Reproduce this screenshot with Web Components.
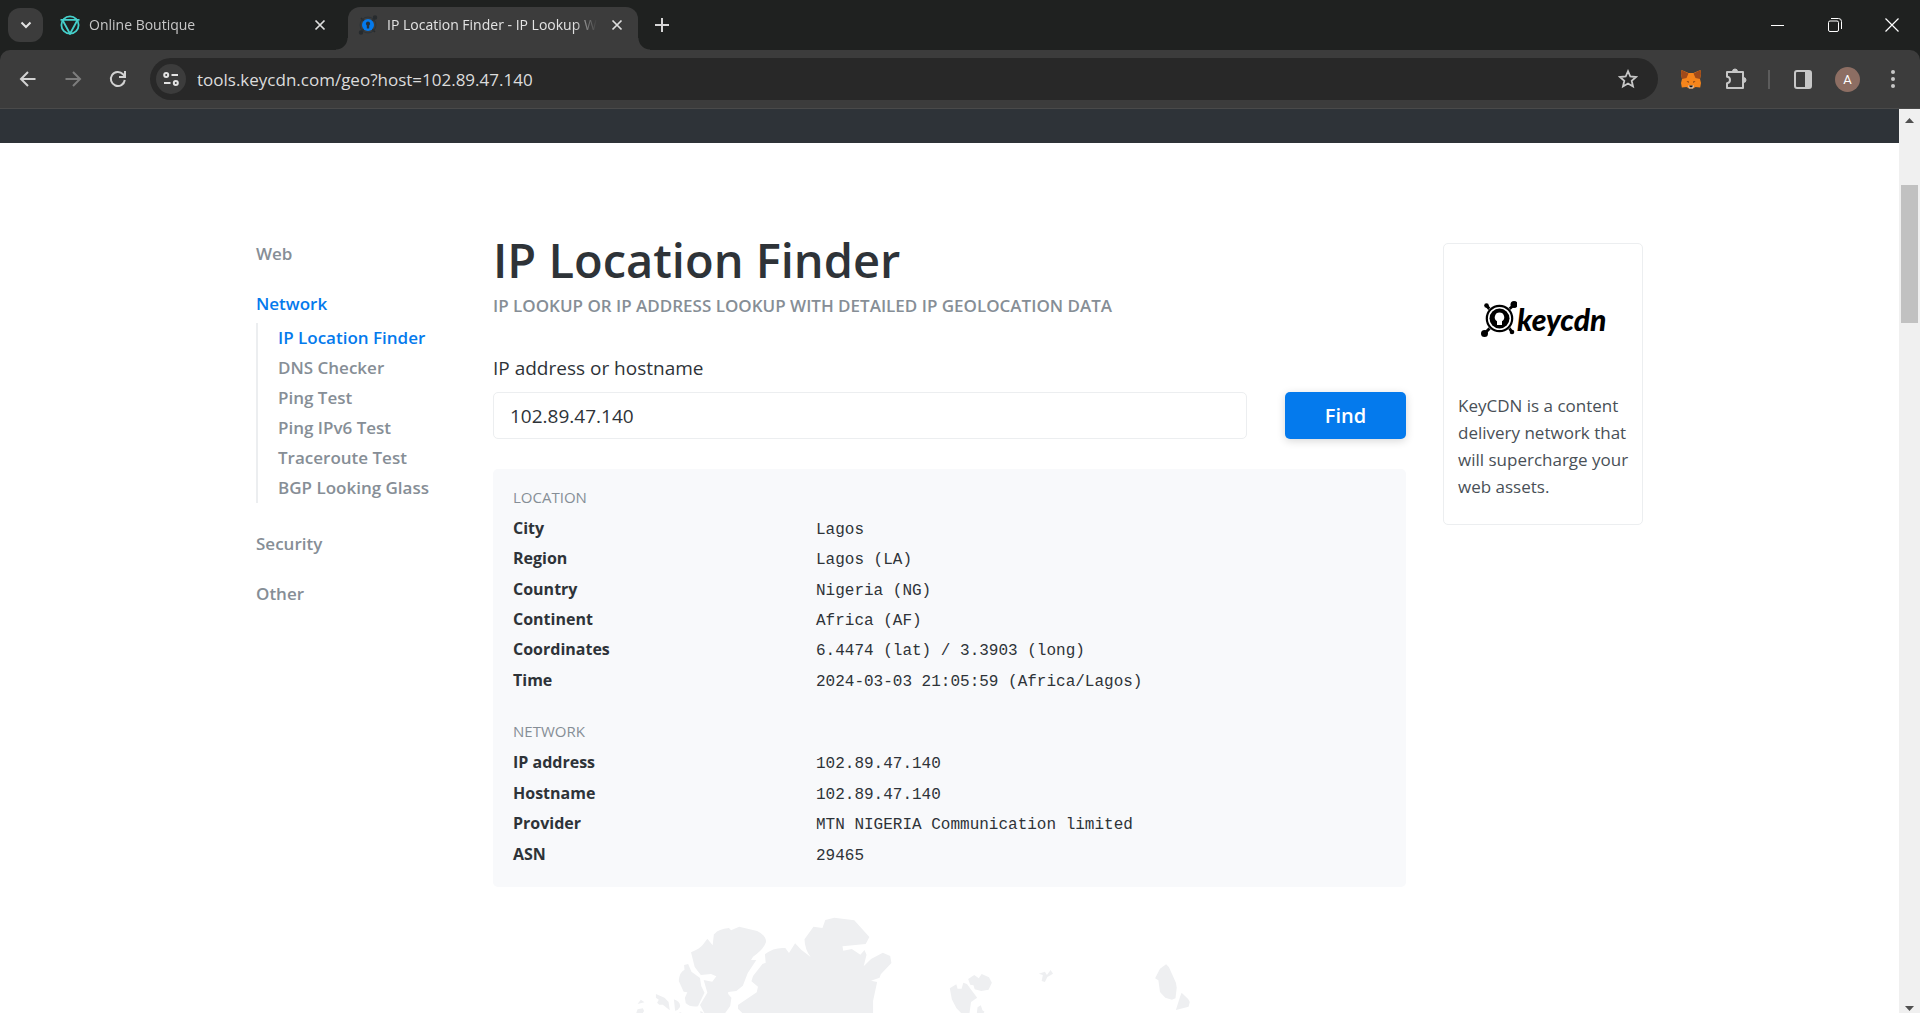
<!DOCTYPE html>
<html lang="en">
<head>
<meta charset="utf-8">
<title>IP Location Finder</title>
<style>
html,body{margin:0;height:100%}
body{font-family:"Open Sans","Noto Sans",sans-serif;color:#2e3338;background:#fff;overflow:hidden}
</style>
</head>
<body>
<app-window></app-window>
<script>
function define(name, html){
  const t=document.createElement('template');
  t.innerHTML=html;
  customElements.define(name, class extends HTMLElement{
    constructor(){super();this.attachShadow({mode:'open'}).appendChild(t.content.cloneNode(true));}
  });
}

define('icon-button', `
<style>
:host{display:flex;flex:none;width:45px;height:36px}
button{all:unset;box-sizing:border-box;flex:1;display:flex;align-items:center;justify-content:center;cursor:pointer}
</style><button type="button"><slot></slot></button>`);

define('browser-tab', `
<style>
:host{display:flex;align-items:center;box-sizing:border-box;height:43px;padding:0 10px 7px;color:#c7c7c7;font-size:14px;position:relative}
:host([active]){background:#3c3c3c;color:#e3e3e3;border-radius:12px 12px 0 0}
:host([active])::before,:host([active])::after{content:"";position:absolute;bottom:0;width:12px;height:12px}
:host([active])::before{left:-12px;background:radial-gradient(circle at 0 0,transparent 11px,#3c3c3c 12px)}
:host([active])::after{right:-12px;background:radial-gradient(circle at 100% 0,transparent 11px,#3c3c3c 12px)}
.title{flex:1;min-width:0;overflow:hidden;white-space:nowrap;margin-left:9px;line-height:20px;-webkit-mask-image:linear-gradient(90deg,#000 calc(100% - 24px),transparent);mask-image:linear-gradient(90deg,#000 calc(100% - 24px),transparent)}
icon-button{width:22px;height:22px;margin-left:9px}
</style>
<slot name="icon"></slot><span class="title"><slot></slot></span>
<icon-button><svg width="12" height="12" viewBox="0 0 12 12" stroke="#dedede" stroke-width="1.7"><path d="M1.5 1.5l9 9M10.5 1.5l-9 9"/></svg></icon-button>`);

define('tab-strip', `
<style>
:host{display:flex;align-items:flex-end;height:50px;background:#1f2120}
.search{all:unset;width:35px;height:34px;margin:0 7px 8px 8px;border-radius:12px;background:#3c3c3c;display:flex;align-items:center;justify-content:center}
.bg{width:291px;margin-right:7px;box-sizing:border-box}
.active{width:290px}
.plus{margin:0 0 7px 1px}
.win{margin-left:auto;display:flex}
.win icon-button{width:57px;height:50px}
</style>
<button class="search" aria-label="Search tabs"><svg width="12" height="8" viewBox="0 0 12 8" fill="none" stroke="#e3e3e3" stroke-width="2"><path d="M1.5 1.5L6 6l4.500-4.500"/></svg></button>
<browser-tab class="bg"><svg slot="icon" width="20" height="20" viewBox="0 0 20 20" fill="none" stroke="#45d0cb" stroke-width="1.800"><circle cx="10" cy="10" r="8.600"/><path d="M.5 4.800h19M2.500 5l7.500 13.800L17.500 5"/></svg>Online Boutique</browser-tab>
<browser-tab class="active" active><svg slot="icon" width="20" height="20" viewBox="0 0 20 20"><g stroke="#272b2e" stroke-width="1.500" fill="#272b2e"><path d="M3 3l14 14M17 3L3 17"/><circle cx="17" cy="2.500" r="1.500"/><circle cx="3" cy="17.500" r="1.500"/></g><circle cx="10" cy="10" r="8" fill="none" stroke="#2c3338"/><circle cx="10" cy="10" r="6" fill="#047aed"/><path d="M10 6.500a2.200 2.200 0 0 1 1.200 4v3H8.800v-3a2.200 2.200 0 0 1 1.200-4z" fill="#26303a"/></svg>IP Location Finder - IP Lookup With Detailed</browser-tab>
<icon-button class="plus"><svg width="14" height="14" viewBox="0 0 14 14" stroke="#d6d6d6" stroke-width="2"><path d="M7 0v14M0 7h14"/></svg></icon-button>
<div class="win">
<icon-button><svg width="14" height="14"><path d="M0 7.500h13" stroke="#fff"/></svg></icon-button>
<icon-button><svg width="14" height="14" viewBox="0 0 14 14" fill="none" stroke="#fff"><rect x=".5" y="3" width="10" height="10.500" rx="1.500"/><path d="M3 .5h7.500a3 3 0 0 1 3 3V11"/></svg></icon-button>
<icon-button><svg width="14" height="14" viewBox="0 0 14 14" stroke="#fff" stroke-width="1.200"><path d="M.5.5l13 13M13.500.5l-13 13"/></svg></icon-button>
</div>`);

define('tool-bar', `
<style>
:host{display:block;background:#1f2120}
.bar{display:flex;align-items:center;box-sizing:border-box;height:59px;padding:0 5px;background:#3c3c3c;border-bottom:1px solid #4a4a4a;border-radius:10px 10px 0 0}
.omni{flex:1;display:flex;align-items:center;height:42px;margin:0 10px 0 10px;border-radius:21px;background:#282828}
.tune{width:30px;height:30px;margin:0 11px 0 6px;border-radius:50%;background:#3c3c3c}
input{flex:1;min-width:0;border:0;outline:0;padding:0;height:30px;font:17px "Open Sans","Noto Sans",sans-serif;color:#dcdcdc;background:none}
.star{width:60px}
.sep{width:2px;height:19px;margin:0 10px;background:#5c5c5c}
.avatar{width:25px;height:25px;border-radius:50%;background:#8d6e63;color:#fff;font:13px/25px Roboto,sans-serif;text-align:center}
</style>
<div class="bar">
<icon-button><svg width="18" height="18" viewBox="0 0 18 18" fill="none" stroke="#d2d2d2" stroke-width="2"><path d="M16.500 9H2.500M9 2L2 9l7 7"/></svg></icon-button>
<icon-button><svg width="18" height="18" viewBox="0 0 18 18" fill="none" stroke="#7d7d7d" stroke-width="2"><path d="M1.500 9h14M9 2l7 7-7 7"/></svg></icon-button>
<icon-button><svg width="18" height="18" viewBox="0 0 18 18" fill="none" stroke="#d2d2d2" stroke-width="2"><path d="M15.800 10A7 7 0 1 1 14 4.200L15.500 6"/><path d="M16 1v6h-6"/></svg></icon-button>
<div class="omni">
<icon-button class="tune"><svg width="16" height="14" viewBox="0 0 16 14" fill="none" stroke="#e3e3e3" stroke-width="2"><circle cx="3.200" cy="3" r="2"/><path d="M8.500 3H15M1 11h6.500"/><circle cx="12.800" cy="11" r="2"/></svg></icon-button>
<input aria-label="Address" value="tools.keycdn.com/geo?host=102.89.47.140" spellcheck="false">
<icon-button class="star"><svg width="20" height="20" viewBox="0 0 20 20" fill="none" stroke="#c7c7c7" stroke-width="1.800"><path d="M10 2.200l2.300 5.300 5.700.500-4.300 3.800 1.300 5.700-5-3-5 3 1.300-5.700L2 8l5.700-.5z"/></svg></icon-button>
</div>
<icon-button><svg width="20" height="19" viewBox="0 0 20 19"><path fill="#f6851b" d="M.5 0L7.500 3h5l7-3 .5 4-1 5 1 4-.8 4.500-4.700-.5L12 18.500H8L5.500 17l-4.700.5L0 13l1-4-1-5z"/><path fill="#a04a1a" d="M.5 0L7.500 3.500 5.500 8 1 9 0 4zM19.500 0l-7 3.500 2 4.500 4.500 1 1-5z"/><path fill="#763d16" d="M5.500 11l2.500.6-.5 1.300zM14.500 11l-2.500.6.500 1.300z"/><path fill="#d8c8bb" d="M7 15.500h6l-1 3H8z"/><path fill="#161616" d="M8.300 15.500h3.400l-.4 1.800H8.700z"/></svg></icon-button>
<icon-button><svg width="22" height="22" viewBox="0 0 22 22" fill="none" stroke="#c7c7c7" stroke-width="2"><path d="M2 4h16v16H2v-4.800c4-.2 4-6.200 0-6.400z" stroke-linejoin="round"/><path d="M7.500 3.500a2.500 2.500 0 0 1 5 0zM18.500 9.500a2.500 2.500 0 0 1 0 5z" fill="#c7c7c7" stroke-width="1"/></svg></icon-button>
<div class="sep"></div>
<icon-button><svg width="18" height="19" viewBox="0 0 18 19"><rect x="1" y="1" width="16" height="17" rx="2" fill="none" stroke="#c7c7c7" stroke-width="2"/><path d="M11 1h6v17h-6z" fill="#c7c7c7"/></svg></icon-button>
<icon-button><span class="avatar">A</span></icon-button>
<icon-button><svg width="4" height="18" viewBox="0 0 4 18" fill="#c7c7c7"><circle cx="2" cy="2" r="2"/><circle cx="2" cy="9" r="2"/><circle cx="2" cy="16" r="2"/></svg></icon-button>
</div>`);

define('side-nav', `
<style>
:host{display:block;padding-top:99px;font-size:17px;font-weight:600}
ul{list-style:none;margin:0;padding:0}
a{color:#868e96;text-decoration:none;white-space:nowrap}
a.on{color:#047aed}
nav>ul{display:flex;flex-direction:column;gap:26px;line-height:24px}
ul ul{margin-top:7px;padding-left:20px;border-left:2px solid #eceef0;line-height:30px}
li.open{margin-bottom:3px}
</style>
<nav aria-label="Tools"><ul>
<li><a href="#">Web</a></li>
<li class="open"><a class="on" href="#">Network</a>
<ul><li><a class="on" href="#">IP Location Finder</a></li><li><a href="#">DNS Checker</a></li><li><a href="#">Ping Test</a></li><li><a href="#">Ping IPv6 Test</a></li><li><a href="#">Traceroute Test</a></li><li><a href="#">BGP Looking Glass</a></li></ul></li>
<li><a href="#">Security</a></li>
<li><a href="#">Other</a></li>
</ul></nav>`);

define('lookup-form', `
<style>
:host{display:block}
form{display:grid;grid-template-columns:1fr 121px;column-gap:38px;row-gap:10px}
label{grid-column:1/-1;font-size:19px;line-height:28px}
input{box-sizing:border-box;height:47px;border:1px solid #eceef0;border-radius:5px;padding:0 16px;font:19px "Open Sans","Noto Sans",sans-serif;color:#2e3338;min-width:0}
button{height:47px;border:0;border-radius:5px;background:#047aed;color:#fff;font:600 20px "Open Sans","Noto Sans",sans-serif;box-shadow:0 2px 8px rgba(0,0,0,.16)}
</style>
<form onsubmit="return false"><label for="host">IP address or hostname</label><input id="host" value="102.89.47.140"><button>Find</button></form>`);

define('result-panel', `
<style>
:host{display:block;padding:15px 20px 17px;background:#f8f9fb;border-radius:5px}
table{width:100%;border-collapse:collapse;table-layout:fixed}
.location{height:182px}
.network{height:122px;margin-top:22px}
caption{text-align:left;font-size:15px;line-height:26px;color:#868e96;padding-bottom:4px}
th,td{padding:0;vertical-align:baseline}
th{width:303px;text-align:left;font-size:16px;font-weight:700;line-height:28px}
td{font:16px/28px "Liberation Mono",monospace}
</style>
<table class="location"><caption>LOCATION</caption><tbody>
<tr><th scope="row">City</th><td>Lagos</td></tr>
<tr><th scope="row">Region</th><td>Lagos (LA)</td></tr>
<tr><th scope="row">Country</th><td>Nigeria (NG)</td></tr>
<tr><th scope="row">Continent</th><td>Africa (AF)</td></tr>
<tr><th scope="row">Coordinates</th><td>6.4474 (lat) / 3.3903 (long)</td></tr>
<tr><th scope="row">Time</th><td>2024-03-03 21:05:59 (Africa/Lagos)</td></tr>
</tbody></table>
<table class="network"><caption>NETWORK</caption><tbody>
<tr><th scope="row">IP address</th><td>102.89.47.140</td></tr>
<tr><th scope="row">Hostname</th><td>102.89.47.140</td></tr>
<tr><th scope="row">Provider</th><td>MTN NIGERIA Communication limited</td></tr>
<tr><th scope="row">ASN</th><td>29465</td></tr>
</tbody></table>`);

define('world-map', `
<style>:host{display:block}svg{display:block;width:100%}</style>
<svg viewBox="0 0 913 123" fill="#eeeff1" aria-hidden="true"><g transform="translate(107 0) scale(.40816 .33333)">
<path d="M281 128Q290 114 316 111L321 118 341 107 385 120Q406 132 407 152Q402 174 375 197L370 207H383L362 246 350 284 334 300 314 303V309L322 320 319 345 305 369H257L245 342 263 305 254 267 275 272 285 256 272 249 247 252 232 228 223 184Q244 173 252 161L263 143 276 163 279 130Z"/>
<path d="M206 222L216 219 224 242 245 261 248 285 256 305 240 346Q220 349 210 336L208 320 214 304 205 302 193 270Q194 244 207 236Z"/>
<path d="M137 309L158 320 168 333 171 358 154 341H145L140 335 144 326 137 320ZM100 326L109 334 92 339ZM92 355L105 352 108 360 103 369H88ZM181 325Q198 332 196 348Q190 360 184 359ZM195 363L206 369H195ZM246 359L257 369H246Z"/>
<path d="M404 190Q426 168 454 171L463 186 478 157 493 176 516 198Q502 177 501 145L523 107 545 111 552 87 574 80 623 88 660 138 651 159 594 166 596 179 617 174 638 191 648 177 653 191 646 226 664 204 693 185 711 195 714 216 688 250 685 260 664 269 679 273 669 330V369H351L338 353V342L384 304 387 287 371 271 375 255 398 219 406 215Z"/>
<path d="M857 292L873 280 876 293H886L890 275 899 279 924 320 909 333 905 369H887L873 351 862 325ZM902 264L917 252 928 262 935 249 953 259 960 275 952 296 934 300 918 295 915 283 907 281ZM925 349L933 343 937 358 942 362 938 369H923Z"/>
<path d="M1075 248L1090 242 1095 252 1104 237 1110 248 1096 258 1090 273 1082 270 1085 252ZM1387 220L1394 229 1411 275 1413 290 1410 322 1401 326 1385 320 1372 303 1368 268 1360 262 1372 233ZM1425 305L1441 324 1445 333 1442 347 1411 357 1421 318Z"/>
</g></svg>`);

define('promo-card', `
<style>
:host{display:block;box-sizing:border-box;align-self:start;margin-top:100px;padding:57px 0 24px 14px;border:1px solid #eceef0;border-radius:5px;font-size:17px;line-height:27px;color:#495057}
.logo{display:flex;align-items:center;height:36px;margin:0 0 55px 23px;color:#000;text-decoration:none;font:italic 900 30px/36px Lato,sans-serif}
p{margin:0}
</style>
<a class="logo" href="#"><svg width="36" height="36" viewBox="0 0 36 36"><g stroke="#000" stroke-width="3" fill="#000"><path d="M5 4l6 7M34 3L25 11M4 32l8-8M31 31l-5-7"/><g stroke="none"><circle cx="5.500" cy="4.500" r="2.300"/><circle cx="33" cy="3.500" r="3.500"/><circle cx="3.500" cy="32.500" r="3.500"/><circle cx="31" cy="31" r="2.300"/></g></g><circle cx="18.500" cy="17.500" r="14" fill="#fff"/><circle cx="18.500" cy="17.500" r="12.700" fill="none" stroke="#000" stroke-width="2.200"/><circle cx="18.500" cy="17.500" r="10" fill="#000"/><path fill="#fff" d="M18.500 11.500a4.700 4.700 0 0 1 2.500 8.700V24h-5v-3.800a4.700 4.700 0 0 1 2.500-8.700z"/></svg>keycdn</a>
<p>KeyCDN is a content delivery network that will supercharge your web assets.</p>`);

define('scroll-rail', `
<style>
:host{display:flex;flex-direction:column;align-items:center;flex:none;width:21px;background:#f0f0f0}
.thumb{width:17px;height:138px;background:#c1c1c1;margin-top:62px}
.up{margin-top:9px}
.down{margin:auto 0 2px}
</style>
<svg class="up" width="9" height="5" fill="#505050"><path d="M0 5l4.500-5L9 5z"/></svg><div class="thumb"></div><svg class="down" width="9" height="5" fill="#505050"><path d="M0 0l4.500 5L9 0z"/></svg>`);

define('tool-page', `
<style>
:host{display:flex;flex:1;min-height:0}
.view{flex:1;min-width:0;overflow:hidden}
.head{height:34px;background:#2e3338}
.cols{display:grid;grid-template-columns:200px minmax(0,1fr) 200px;gap:37px;max-width:1387px;margin:0 auto}
main{padding-top:82px}
h1{margin:0;font-size:47px;line-height:70px;font-weight:600}
.sub{margin:0 0 37px;font-size:17px;line-height:22px;font-weight:600;color:#868e96}
result-panel{margin-top:30px}
world-map{margin-top:4px}
</style>
<div class="view"><div class="head"></div><div class="cols">
<side-nav></side-nav>
<main><h1>IP Location Finder</h1><p class="sub">IP LOOKUP OR IP ADDRESS LOOKUP WITH DETAILED IP GEOLOCATION DATA</p>
<lookup-form></lookup-form><result-panel></result-panel><world-map></world-map></main>
<promo-card></promo-card>
</div></div><scroll-rail></scroll-rail>`);

define('app-window', `
<style>:host{display:flex;flex-direction:column;height:100vh}</style>
<tab-strip></tab-strip><tool-bar></tool-bar><tool-page></tool-page>`);
</script>
</body>
</html>
